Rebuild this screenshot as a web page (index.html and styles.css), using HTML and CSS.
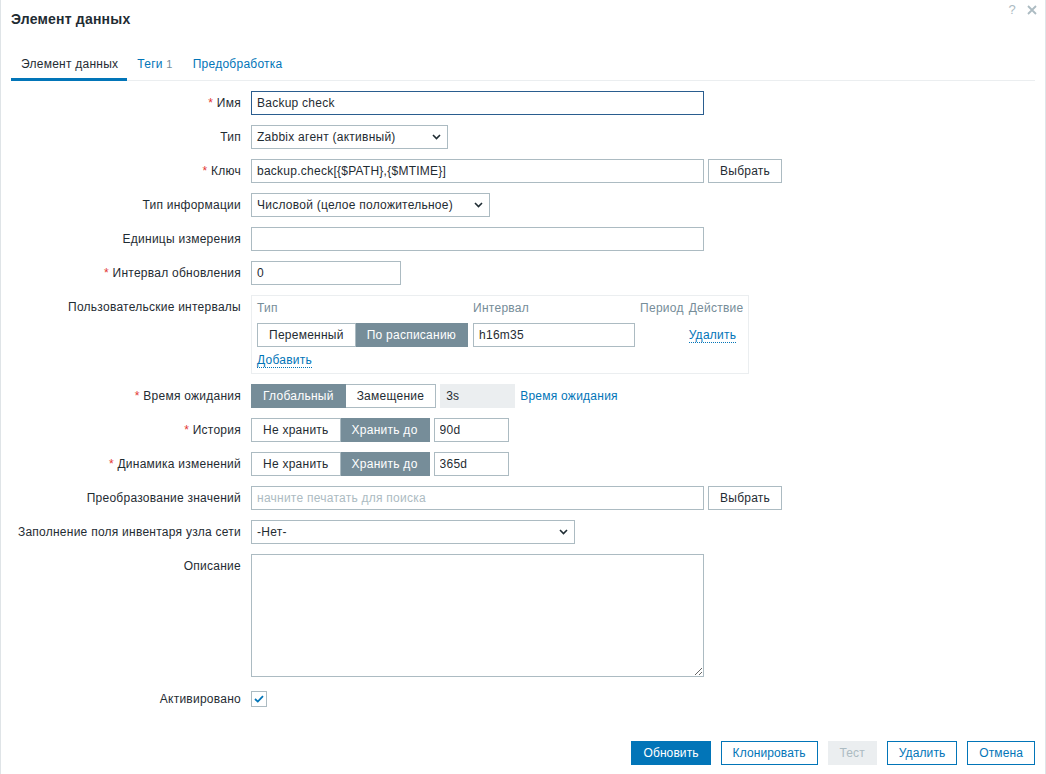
FILE: index.html
```html
<!DOCTYPE html>
<html lang="ru">
<head>
<meta charset="utf-8">
<title>Элемент данных</title>
<link rel="stylesheet" href="styles.css">
</head>
<body>
<div class="dialog">
  <div class="head">
    <h4 class="title">Элемент данных</h4>
    <div class="head-icons">
      <span class="help">?</span>
      <svg class="close" width="10" height="10" viewBox="0 0 10 10"><path d="M1 1L9 9M9 1L1 9" stroke="#acbbc2" stroke-width="1.8" fill="none"/></svg>
    </div>
  </div>
  <ul class="tabs">
    <li class="tab active">Элемент данных</li>
    <li class="tab">Теги <span class="count">1</span></li>
    <li class="tab">Предобработка</li>
  </ul>
  <div class="content">
    <div class="form">
      <label class="lbl"><span class="req">*</span> Имя</label>
      <div class="fld"><input class="inp w453 focus" value="Backup check"></div>

      <label class="lbl">Тип</label>
      <div class="fld"><div class="select w197"><span>Zabbix агент (активный)</span><svg class="chev" width="9" height="6" viewBox="0 0 9 6"><path d="M1 1L4.5 4.5L8 1" stroke="#1f2c33" stroke-width="1.6" fill="none"/></svg></div></div>

      <label class="lbl"><span class="req">*</span> Ключ</label>
      <div class="fld"><input class="inp w453" value="backup.check[{$PATH},{$MTIME}]"><button class="btn-grey">Выбрать</button></div>

      <label class="lbl">Тип информации</label>
      <div class="fld"><div class="select w239"><span>Числовой (целое положительное)</span><svg class="chev" width="9" height="6" viewBox="0 0 9 6"><path d="M1 1L4.5 4.5L8 1" stroke="#1f2c33" stroke-width="1.6" fill="none"/></svg></div></div>

      <label class="lbl">Единицы измерения</label>
      <div class="fld"><input class="inp w453" value=""></div>

      <label class="lbl"><span class="req">*</span> Интервал обновления</label>
      <div class="fld"><input class="inp w150" value="0"></div>

      <label class="lbl">Пользовательские интервалы</label>
      <div class="fld">
        <div class="ci">
          <div class="ci-grid">
            <span class="ci-h">Тип</span>
            <span class="ci-h">Интервал</span>
            <span class="ci-h">Период</span>
            <span class="ci-h">Действие</span>
            <div class="seg"><span class="seg-i">Переменный</span><span class="seg-i on">По расписанию</span></div>
            <input class="inp w162" value="h16m35">
            <span></span>
            <span class="ci-act"><span class="link-act">Удалить</span></span>
          </div>
          <span class="link-act add">Добавить</span>
        </div>
      </div>

      <label class="lbl"><span class="req">*</span> Время ожидания</label>
      <div class="fld"><div class="seg"><span class="seg-i on">Глобальный</span><span class="seg-i">Замещение</span></div><input class="inp w75 dis" value="3s" disabled><span class="link">Время ожидания</span></div>

      <label class="lbl"><span class="req">*</span> История</label>
      <div class="fld"><div class="seg"><span class="seg-i">Не хранить</span><span class="seg-i on">Хранить до</span></div><input class="inp w75" value="90d"></div>

      <label class="lbl"><span class="req">*</span> Динамика изменений</label>
      <div class="fld"><div class="seg"><span class="seg-i">Не хранить</span><span class="seg-i on">Хранить до</span></div><input class="inp w75" value="365d"></div>

      <label class="lbl">Преобразование значений</label>
      <div class="fld"><input class="inp w453" placeholder="начните печатать для поиска"><button class="btn-grey">Выбрать</button></div>

      <label class="lbl">Заполнение поля инвентаря узла сети</label>
      <div class="fld"><div class="select w324"><span>-Нет-</span><svg class="chev" width="9" height="6" viewBox="0 0 9 6"><path d="M1 1L4.5 4.5L8 1" stroke="#1f2c33" stroke-width="1.6" fill="none"/></svg></div></div>

      <label class="lbl">Описание</label>
      <div class="fld"><textarea class="txt"></textarea></div>

      <label class="lbl">Активировано</label>
      <div class="fld"><span class="chk"><svg width="10" height="8" viewBox="0 0 10 8"><path d="M1 4L3.8 6.6L9 1.2" stroke="#0275b8" stroke-width="1.8" fill="none"/></svg></span></div>
    </div>
  </div>
  <div class="foot">
    <button class="btn primary">Обновить</button>
    <button class="btn alt">Клонировать</button>
    <button class="btn disabled">Тест</button>
    <button class="btn alt">Удалить</button>
    <button class="btn alt">Отмена</button>
  </div>
</div>
</body>
</html>
```
FILE: styles.css
```css
* { box-sizing: border-box; }
html, body { margin: 0; padding: 0; }
body {
  font-family: "Liberation Sans", Arial, sans-serif;
  font-size: 12px;
  letter-spacing: 0.25px;
  color: #1f2c33;
  background: #fff;
}
.dialog {
  width: 1046px;
  height: 774px;
  border-left: 1px solid #dfe4e7;
  border-right: 1px solid #dfe4e7;
  padding: 0 10px;
  display: flex;
  flex-direction: column;
}
.head {
  height: 40px;
  display: flex;
  justify-content: space-between;
  align-items: flex-start;
}
.title {
  margin: 0;
  padding-top: 11px;
  font-size: 14px;
  line-height: 16px;
  font-weight: bold;
  letter-spacing: 0.2px;
  color: #1f2c33;
}
.head-icons {
  display: flex;
  align-items: center;
  gap: 11px;
  padding-top: 3px;
  margin-right: -2px;
}
.help {
  color: #acbbc2;
  font-size: 13px;
  line-height: 14px;
}
.close { display: block; }
.tabs {
  list-style: none;
  margin: 10px 0 0;
  padding: 0;
  display: flex;
  border-bottom: 1px solid #ebeef0;
  height: 31px;
}
.tab {
  padding: 7px 10px 0;
  line-height: 14px;
  height: 31px;
  color: #0275b8;
  white-space: nowrap;
}
.tab.active {
  color: #1f2c33;
  border-bottom: 3px solid #0275b8;
  padding-right: 9px;
}
.count { color: #768d99; font-size: 11px; }
.content { flex: 1; padding-top: 10px; }
.form {
  display: grid;
  grid-template-columns: 230px 1fr;
  column-gap: 10px;
  row-gap: 10px;
}
.lbl {
  text-align: right;
  line-height: 24px;
  white-space: nowrap;
}
.req { color: #e33734; }
.fld {
  display: flex;
  align-items: center;
  gap: 4px;
  min-height: 24px;
}
.inp {
  height: 24px;
  border: 1px solid #acbbc2;
  background: #fff;
  padding: 0 5px;
  font: inherit;
  letter-spacing: inherit;
  color: #1f2c33;
  outline: none;
}
.inp::placeholder { color: #acbbc2; }
.inp.focus { border-color: #2a5d8f; }
.inp.dis { background: #ebeef0; border-color: #ebeef0; color: #1f2c33; }
.w453 { width: 453px; }
.w150 { width: 150px; }
.w162 { width: 162px; }
.w75 { width: 75px; }
.w197 { width: 197px; }
.w239 { width: 239px; }
.w324 { width: 324px; }
.select {
  height: 24px;
  border: 1px solid #acbbc2;
  padding: 0 6px 0 5px;
  display: flex;
  align-items: center;
  justify-content: space-between;
  white-space: nowrap;
}
.chev { display: block; }
.btn-grey {
  height: 24px;
  border: 1px solid #acbbc2;
  background: #fff;
  color: #1f2c33;
  font: inherit;
  letter-spacing: inherit;
  padding: 0 11px;
  white-space: nowrap;
}
.ci {
  width: 498px;
  border: 1px solid #ebeef0;
  padding: 5px 5px 5px;
}
.ci-grid {
  display: grid;
  grid-template-columns: auto 162px auto auto;
  column-gap: 5px;
  row-gap: 8px;
  align-items: center;
  justify-content: start;
}
.ci-h { color: #768d99; line-height: 14px; white-space: nowrap; }
.ci-act { text-align: left; }
.seg { display: flex; height: 24px; white-space: nowrap; }
.seg-i {
  border: 1px solid #acbbc2;
  padding: 0 11px;
  line-height: 22px;
  background: #fff;
  color: #1f2c33;
  white-space: nowrap;
}
.seg-i + .seg-i { border-left: none; }
.seg-i.on { background: #768d99; border-color: #768d99; color: #fff; }
.link-act {
  color: #0275b8;
  border-bottom: 1px dotted #0275b8;
  line-height: 14px;
}
.add { display: inline-block; margin-top: 6px; }
.link { color: #0275b8; margin-left: 1px; white-space: nowrap; }
.txt {
  width: 453px;
  height: 123px;
  border: 1px solid #acbbc2;
  font: inherit;
  margin: 0;
  display: block;
}
.chk {
  width: 16px;
  height: 16px;
  border: 1px solid #acbbc2;
  display: flex;
  align-items: center;
  justify-content: center;
}
.foot {
  display: flex;
  justify-content: flex-end;
  gap: 10px;
  padding-bottom: 9px;
}
.btn {
  height: 24px;
  padding: 0 11px;
  font: inherit;
  letter-spacing: 0.1px;
  border: 1px solid #0275b8;
  background: #fff;
  color: #0275b8;
  white-space: nowrap;
}
.btn.primary { background: #0275b8; color: #fff; }
.btn.disabled { background: #ebeef0; border-color: #ebeef0; color: #acbbc2; }
```
